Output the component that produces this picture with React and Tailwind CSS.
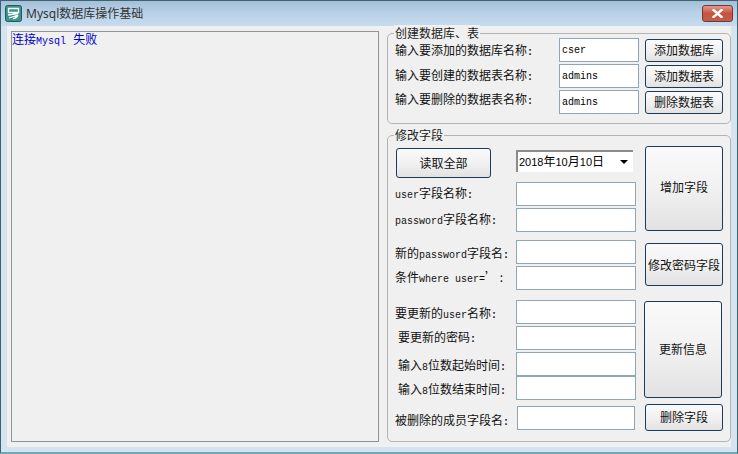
const MONO = 'font-["Liberation_Mono","Noto_Sans_CJK_SC",monospace]';

function Lat({ children }) {
  return <span className={`${MONO} text-[10px]`}>{children}</span>;
}

// the colons in the labels sit wider than the sans font puts them
function Colon() {
  return <span className={`${MONO} text-[10px] font-bold`}>:</span>;
}

function Field({ value, className = 'w-[120px] h-6' }) {
  return (
    <div className={`${className} shrink-0 bg-white border border-[#8fa5b8] pl-[2px] pt-[1px] flex items-center text-[10px] text-black ${MONO}`}>
      {value}
    </div>
  );
}

function Btn({ children, className = '' }) {
  return (
    <button className={`shrink-0 rounded-[3px] border border-[#1d3a58] bg-gradient-to-b from-[#fafafa] via-[#f1f1f1] to-[#e2e2e2] text-xs text-[#111] ${className}`}>
      {children}
    </button>
  );
}

function Group({ title, className = '', children }) {
  return (
    <section className={`relative rounded-[5px] border border-[#b4b4b4] ${className}`}>
      <span className="absolute left-[6px] top-[-9px] bg-[#f0f0f0] px-[1px] text-xs leading-4 text-[#222]">{title}</span>
      {children}
    </section>
  );
}

function Row({ label, field, labelClass = '', className = '' }) {
  return (
    <div className={`flex items-center ${className}`}>
      <div className={`w-[121px] shrink-0 whitespace-nowrap text-xs text-[#111] ${labelClass}`}>{label}</div>
      {field}
    </div>
  );
}

function DbRow({ label, value, action, labelClass = '', className = '' }) {
  return (
    <div className={`flex items-center h-6 ${className}`}>
      <div className={`w-[164px] shrink-0 text-xs text-[#111] ${labelClass}`}>{label}<Colon /></div>
      <Field value={value} className="w-[80px] h-6" />
      <Btn className="ml-[6px] w-[78px] h-[23px]">{action}</Btn>
    </div>
  );
}

export default function App() {
  return (
    <div className={`w-[738px] h-[454px] overflow-hidden flex flex-col bg-[#d5e4ef] border border-[#3b6470] border-b-[#6fa9b8] border-b-2 font-["Noto_Sans_CJK_SC",sans-serif]`}>
      {/* Title bar */}
      <header className="h-[25px] shrink-0 flex items-center pl-1 pr-1 bg-gradient-to-b from-[#a4c0d8] via-[#b9d2e8] to-[#c6dbee]">
        <svg width="17" height="17" viewBox="0 0 17 17" className="shrink-0">
          <rect x="0.5" y="0.5" width="16" height="16" rx="2" fill="#3a9488" stroke="#1c5c58" />
          <path d="M3.5 3.5h10v4h-10zM3 10l10-1.5M4 13l9-3M8 13.5c2 0 4-1 5-3.5" fill="none" stroke="#fff" strokeWidth="1.3" />
        </svg>
        <span className={`ml-1 text-xs text-[#333] font-["Noto_Sans","Noto_Sans_CJK_SC",sans-serif]`}>Mysql数据库操作基础</span>
        <button className="ml-auto w-[31px] h-[17px] rounded-[3px] border border-[#6e3a36] bg-gradient-to-b from-[#e09a8c] via-[#c9503f] to-[#c0604f] flex items-center justify-center">
          <svg width="11" height="9" viewBox="0 0 11 9">
            <path d="M1.5 1l8 7M9.5 1l-8 7" stroke="#fff" strokeWidth="2.4" strokeLinecap="square" />
          </svg>
        </button>
      </header>

      {/* Client area */}
      <div className="flex-1 mx-[6px] mb-[5px] bg-[#f0f0f0] flex pl-1 pt-[5px]">
        {/* Log box */}
        <div className={`w-[368px] h-[411px] shrink-0 border border-[#8e9499] pt-[1px] text-xs leading-[16px] text-[#0000d0] ${MONO}`}>
          <span>连接<span className="text-[10px]">Mysql</span> 失败</span>
        </div>

        <div className="ml-2 w-[344px] shrink-0">
          <Group title="创建数据库、表" className="mt-[2px] h-[91px] pl-[7px] pt-[4px]">
            <DbRow label="输入要添加的数据库名称" value="cser" action="添加数据库" labelClass="pt-[2px]" />
            <DbRow label="输入要创建的数据表名称" value="admins" action="添加数据表" labelClass="-mt-[1px]" className="mt-[2px]" />
            <DbRow label="输入要删除的数据表名称" value="admins" action="删除数据表" labelClass="-mt-[5px]" className="mt-[2px]" />
          </Group>

          <Group title="修改字段" className="mt-[11px] h-[307px] pl-[7px] pt-[10px] flex">
            <div className="w-[250px] shrink-0">
              <div className="flex items-center h-[33px]">
                <Btn className="ml-[1px] w-[95px] h-[30px]">读取全部</Btn>
                <div className="ml-[25px] w-[117px] h-[22px] mb-[3px] flex items-center justify-between pl-[1px] pr-[5px] bg-white border-t-2 border-l-2 border-[#8b8b8b] text-xs text-black">
                  <span className='font-["Liberation_Sans","Noto_Sans_CJK_SC",sans-serif]'>
                    <span className="text-[11px]">2018</span>年<span className="text-[11px]">10</span>月<span className="text-[11px]">10</span>日
                  </span>
                  <span className="w-0 h-0 border-x-[4px] border-x-transparent border-t-[4px] border-t-black" />
                </div>
              </div>
              <Row className="mt-[3px]" label={<><Lat>user</Lat>字段名称<Colon /></>} field={<Field />} />
              <Row className="mt-[2px]" label={<><Lat>password</Lat>字段名称<Colon /></>} field={<Field />} />
              <Row className="mt-2" labelClass="pt-[4px]" label={<>新的<Lat>password</Lat>字段名<Colon /></>} field={<Field />} />
              <Row className="mt-[2px]" label={<>条件<Lat>where user=</Lat>’ :</>} field={<Field />} />
              <Row className="mt-[10px]" labelClass="pt-[4px]" label={<>要更新的<Lat>user</Lat>名称<Colon /></>} field={<Field />} />
              <Row className="mt-[2px]" label={<span className="pl-[3px]">要更新的密码<Colon /></span>} field={<Field />} />
              <Row className="mt-[2px]" labelClass="pt-[4px]" label={<span className="pl-[3px]">输入<Lat>8</Lat>位数起始时间<Colon /></span>} field={<Field />} />
              <Row labelClass="pt-[4px]" label={<span className="pl-[3px]">输入<Lat>8</Lat>位数结束时间<Colon /></span>} field={<Field />} />
              <Row className="mt-[6px]" labelClass="pt-[6px]" label={<span>被删除的成员字段名<Colon /></span>} field={<Field className="ml-[1px] w-[118px] h-6" />} />
            </div>
            <div className="w-[78px] flex flex-col">
              <Btn className="w-[78px] h-[85px] pb-[3px]">增加字段</Btn>
              <Btn className="mt-3 w-[78px] h-[43px]">修改密码字段</Btn>
              <Btn className="mt-[15px] -ml-[1px] w-[78px] h-[97px] pb-[1px]">更新信息</Btn>
              <Btn className="mt-[6px] w-[78px] h-[27px] pb-[2px]">删除字段</Btn>
            </div>
          </Group>
        </div>
      </div>
    </div>
  );
}
